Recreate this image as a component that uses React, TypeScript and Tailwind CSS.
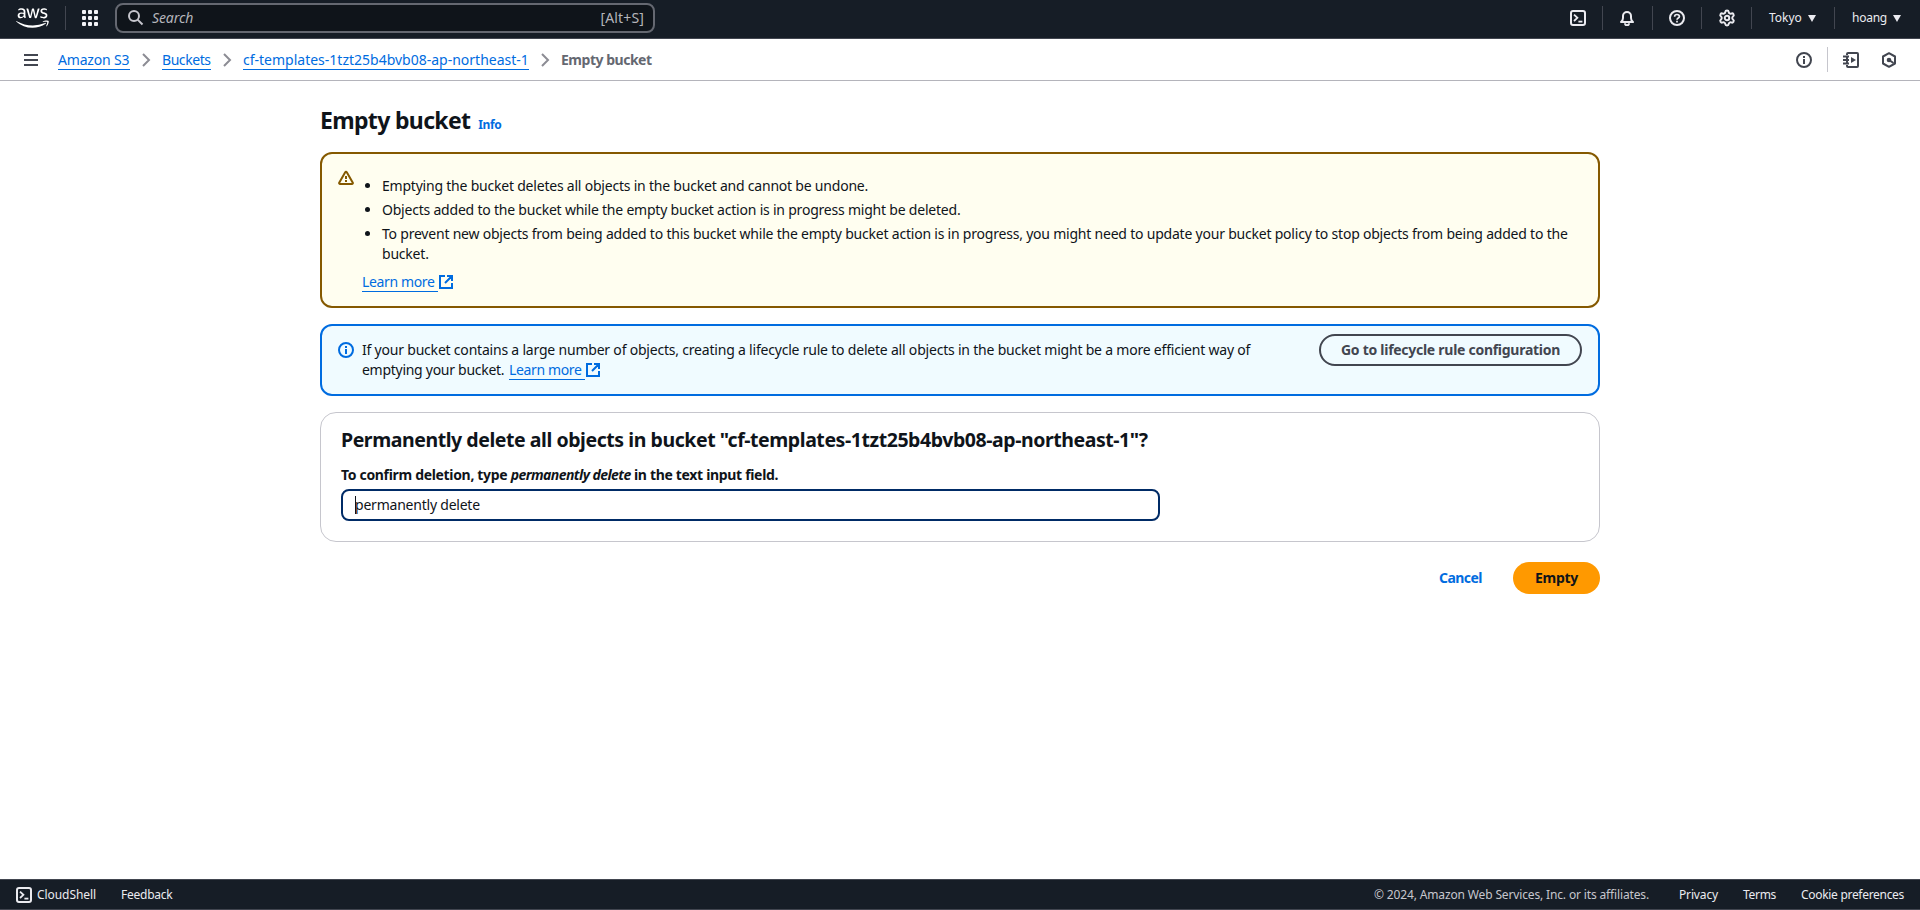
import type { ReactNode } from "react";
import { FaAws } from "react-icons/fa";
import { Settings } from "lucide-react";

const BUCKET = "cf-templates-1tzt25b4bvb08-ap-northeast-1";

function Icon({ children, className = "" }: { children: ReactNode; className?: string }) {
  return (
    <svg
      viewBox="0 0 16 16"
      fill="none"
      stroke="currentColor"
      strokeWidth="2"
      className={`block size-4 shrink-0 ${className}`}
    >
      {children}
    </svg>
  );
}

function TerminalIcon() {
  return (
    <Icon>
      <rect x="1" y="1" width="14" height="14" rx="2" />
      <path d="m4 4.6 3.4 3.2L4 11" strokeWidth="1.8" />
      <path d="M8.4 11.6h4" strokeWidth="1.8" />
    </Icon>
  );
}

function InfoIcon({ className = "" }: { className?: string }) {
  return (
    <Icon className={className}>
      <circle cx="8" cy="8" r="7" />
      <path d="M8 4v2M8 7v5" />
    </Icon>
  );
}

function ExternalIcon({ className = "" }: { className?: string }) {
  return (
    <Icon className={className}>
      <path d="M9 2h5v5M7 9l6.5-6.5M14 9.05V14H2V2h5" />
    </Icon>
  );
}

function Chevron({ className = "" }: { className?: string }) {
  return (
    <Icon className={`text-[#8c8c94] ${className}`}>
      <path d="m5 2 6 6-6 6" />
    </Icon>
  );
}

function Caret({ className = "" }: { className?: string }) {
  return (
    <svg viewBox="0 0 8 7" className={`block h-[7px] w-2 shrink-0 ${className}`} fill="currentColor">
      <path d="M0 0h8L4 7z" />
    </svg>
  );
}

function LearnMore({ className = "" }: { className?: string }) {
  return (
    <a className={`inline-flex h-5 text-[#006ce0] ${className}`}>
      <span className="h-5 w-[76px] border-b border-[#006ce0] tracking-[-0.36px]">Learn more</span>
      <ExternalIcon className="mt-[2px]" />
    </a>
  );
}

function TopNav() {
  return (
    <header className="flex h-[39px] items-start border-b border-[#424650] bg-[#161d26] text-[12px] leading-[18px] text-[#ebebf0]">
      <FaAws className="ml-[16px] mt-[5px] h-[26px] w-[33px] shrink-0 text-white" />
      <div className="ml-[16px] mt-[6px] h-6 w-px bg-[#424650]" />
      <div className="ml-[16px] mt-[10px] grid size-4 grid-cols-3 gap-[2px]">
        {Array.from({ length: 9 }, (_, i) => (
          <span key={i} className="size-[4px] rounded-[1px] bg-[#f3f3f7]" />
        ))}
      </div>
      <div className="ml-[17px] mt-[3px] flex h-[30px] w-[540px] items-center rounded-[8px] border-2 border-[#656871] bg-[#0f141a] pl-[11px] pr-[9px] text-[14px] text-[#b4b4bb]">
        <Icon className="text-[#c6c6cd]">
          <circle cx="6" cy="6" r="5" />
          <path d="m9.600 9.600 4.900 4.900" />
        </Icon>
        <span className="ml-[8px] flex-1 italic tracking-[-0.1px]">Search</span>
        <span className="tracking-[0.14px]">[Alt+S]</span>
      </div>
      <div className="ml-auto flex">
        <div className="mr-[16px] mt-[10px]">
          <TerminalIcon />
        </div>
        <div className="mt-[6px] h-6 w-px bg-[#424650]" />
        <div className="ml-[16px] mr-[17px] mt-[10px]">
          <Icon>
            <path d="M2 12.1c1.3-1 2-2.2 2-4V6a4 4 0 0 1 8 0v2.100c0 1.800.7 3 2 4z" strokeLinejoin="round" />
            <path d="M6 13.200C6 16 10 16 10 13.200" />
          </Icon>
        </div>
        <div className="mt-[6px] h-6 w-px bg-[#424650]" />
        <div className="mx-[16px] mt-[10px]">
          <Icon>
            <circle cx="8" cy="8" r="7" />
            <path d="M5.600 6.700C5.600 3.800 10.400 3.900 10.400 6.400 10.400 8 8 7.900 8 9.800M8 10.800v1.700" strokeWidth="1.7" />
          </Icon>
        </div>
        <div className="mt-[7px] h-[22px] w-px bg-[#424650]" />
        <div className="ml-[17px] mr-[16px] mt-[9px]">
          <Settings size={18} strokeWidth={2.6} className="-mx-px block" />
        </div>
        <div className="mt-[7px] h-[22px] w-px bg-[#424650]" />
        <span className="ml-[17px] mt-[9px] w-[39px]">Tokyo</span>
        <Caret className="mt-[15px]" />
        <div className="ml-[18px] mt-[7px] h-[22px] w-px bg-[#424650]" />
        <span className="ml-[17px] mt-[9px] w-[41px] tracking-[-0.24px]">hoang</span>
        <Caret className="mr-[19px] mt-[15px]" />
      </div>
    </header>
  );
}

function Breadcrumbs() {
  return (
    <nav className="flex h-[42px] items-start border-b border-[#b4b4bb] pt-[11px] leading-5">
      <div className="ml-[24px] mt-[4px] flex h-3 w-[14px] flex-col justify-between">
        <span className="h-[2px] bg-[#424650]" />
        <span className="h-[2px] bg-[#424650]" />
        <span className="h-[2px] bg-[#424650]" />
      </div>
      <a className="ml-[20px] h-5 w-[72px] whitespace-nowrap border-b border-[#006ce0] tracking-[-0.18px] text-[#006ce0]">Amazon S3</a>
      <Chevron className="ml-[8px] mt-[2px]" />
      <a className="ml-[8px] h-5 w-[49px] whitespace-nowrap border-b border-[#006ce0] tracking-[-0.44px] text-[#006ce0]">Buckets</a>
      <Chevron className="ml-[8px] mt-[2px]" />
      <a className="ml-[8px] h-5 w-[286px] whitespace-nowrap border-b border-[#006ce0] text-[#006ce0]">{BUCKET}</a>
      <Chevron className="ml-[8px] mt-[2px]" />
      <span className="ml-[8px] font-bold tracking-[-0.48px] text-[#656871]">Empty bucket</span>
      <div className="ml-auto flex text-[#424650]">
        <InfoIcon className="mt-[2px]" />
        <div className="ml-[15px] mt-[-3px] h-[25px] w-px bg-[#c6c6cd]" />
        <Icon className="ml-[15px] mt-[2px]">
          <path d="M4 3V2a1 1 0 0 1 1-1h9a1 1 0 0 1 1 1v12a1 1 0 0 1-1 1H5a1 1 0 0 1-1-1v-1M4 5v2M4 9v2" />
          <path d="M0 4.500h6M0 8h6M0 11.500h6" strokeWidth="1.800" />
          <path d="M8 5v6l5-3z" fill="currentColor" stroke="none" />
        </Icon>
        <Icon className="ml-[22px] mr-[23px] mt-[2px]">
          <path d="m8 1.200 6 3.300v7l-6 3.300-6-3.300v-7z" strokeLinejoin="round" />
          <circle cx="8" cy="8" r="2.300" fill="currentColor" stroke="none" />
          <path d="m8 8 4.500 3" />
        </Icon>
      </div>
    </nav>
  );
}

export default function App() {
  return (
    <div className="flex h-[910px] flex-col bg-white font-['Noto_Sans','Open_Sans',sans-serif] text-[14px] leading-5 text-[#0f141a]">
      <TopNav />
      <Breadcrumbs />
      <main className="mx-auto w-[1280px] flex-1">
        <div className="flex h-[71px] items-baseline pt-[23px]">
          <h1 className="text-[23px] font-bold leading-[32px] tracking-[-0.66px]">Empty bucket</h1>
          <a className="ml-[8px] text-[12px] font-bold tracking-[-0.4px] text-[#006ce0]">Info</a>
        </div>

        <section className="flex h-[156px] rounded-[12px] border-2 border-[#855900] bg-[#fffef0] pl-4">
          <Icon className="mt-4 text-[#855900]">
            <path d="M7.200 2.300a.9.9 0 0 1 1.600 0l6 10.400a.9.9 0 0 1-.8 1.300H2a.9.9 0 0 1-.8-1.300z" />
            <path d="M8 6v3M8 10v2" />
          </Icon>
          <div className="ml-2 pt-[22px] tracking-[-0.213px]">
            <ul className="flex w-[1212px] list-disc flex-col gap-1 pl-5">
              <li>Emptying the bucket deletes all objects in the bucket and cannot be undone.</li>
              <li>Objects added to the bucket while the empty bucket action is in progress might be deleted.</li>
              <li>
                To prevent new objects from being added to this bucket while the empty bucket action is in progress, you might need to update your bucket policy to stop objects from being added to the bucket.
              </li>
            </ul>
            <LearnMore className="mt-2" />
          </div>
        </section>

        <section className="mt-4 flex h-[72px] rounded-[12px] border-2 border-[#006ce0] bg-[#f0fbff] pl-4">
          <InfoIcon className="mt-4 text-[#006ce0]" />
          <div className="ml-2 w-[910px] pt-[14px] tracking-[-0.205px]">
            <p>If your bucket contains a large number of objects, creating a lifecycle rule to delete all objects in the bucket might be a more efficient way of</p>
            <p className="flex">
              <span className="w-[147px] tracking-[-0.28px]">emptying your bucket.</span>
              <LearnMore />
            </p>
          </div>
          <button className="ml-auto mr-4 mt-2 h-8 w-[263px] rounded-full border-2 border-[#424650] font-bold tracking-[-0.275px] text-[#424650]">
            Go to lifecycle rule configuration
          </button>
        </section>

        <section className="mt-4 h-[130px] rounded-[16px] border border-[#c6c6cd] pl-5 pt-[15px]">
          <h2 className="text-[19.5px] font-bold leading-6 tracking-[-0.44px]">
            Permanently delete all objects in bucket "{BUCKET}"?
          </h2>
          <label className="mt-[13px] block font-bold tracking-[-0.325px]">
            To confirm deletion, type <em className="tracking-[-0.565px]">permanently delete</em> in the text input field.
          </label>
          <div className="mt-[4px] flex h-8 w-[819px] items-center rounded-[8px] border-2 border-[#002b66] pl-[12px]">
            <span className="h-[18px] w-px bg-[#0f141a]" />
            <span className="-ml-px tracking-[-0.22px]">permanently delete</span>
          </div>
        </section>

        <div className="mt-5 flex justify-end font-bold">
          <button className="mr-[31px] tracking-[-0.53px] text-[#006ce0]">Cancel</button>
          <button className="h-8 w-[87px] rounded-full bg-[#ff9900] tracking-[-0.28px]">Empty</button>
        </div>
      </main>

      <footer className="flex h-[31px] items-center border-y border-[#424650] bg-[#161d26] text-[12px] leading-[18px] text-[#ebebf0]">
        <div className="ml-4">
          <TerminalIcon />
        </div>
        <span className="ml-[5px] w-[84px] tracking-[-0.07px]">CloudShell</span>
        <span className="tracking-[-0.24px]">Feedback</span>
        <span className="ml-auto w-[305px] tracking-[-0.145px] text-[#c6c6cd]">© 2024, Amazon Web Services, Inc. or its affiliates.</span>
        <span className="w-[64px] tracking-[-0.15px]">Privacy</span>
        <span className="w-[58px] tracking-[-0.3px]">Terms</span>
        <span className="mr-4 w-[103px] whitespace-nowrap tracking-[-0.3px]">Cookie preferences</span>
      </footer>
    </div>
  );
}
